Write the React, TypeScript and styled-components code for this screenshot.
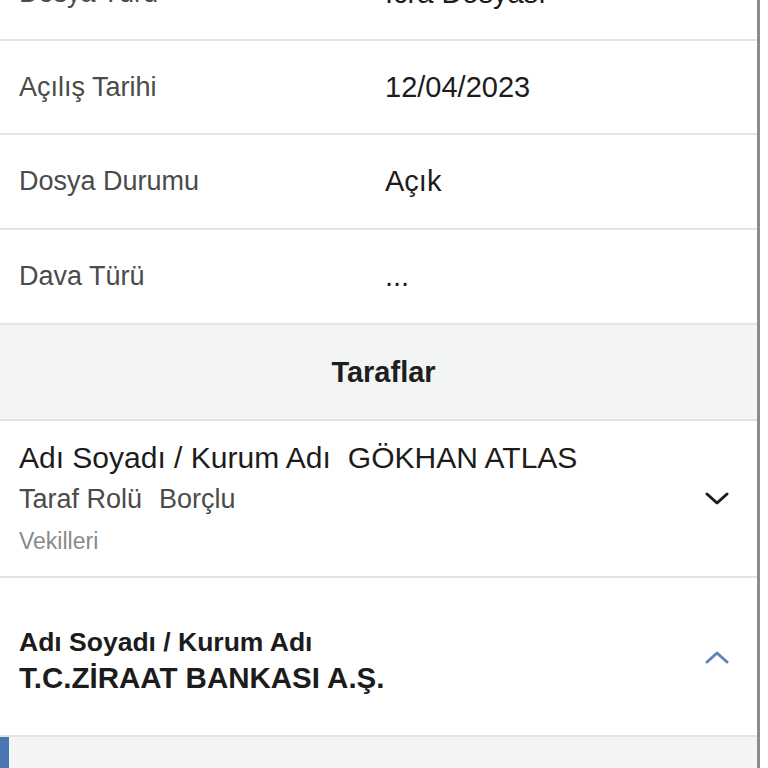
import React from 'react';
import styled, { createGlobalStyle } from 'styled-components';

const GlobalStyle = createGlobalStyle`
  html, body {
    margin: 0;
    padding: 0;
    background: #fff;
    font-family: "Liberation Sans", Arial, Helvetica, sans-serif;
    overflow: hidden;
  }
  * {
    box-sizing: border-box;
  }
`;

const Page = styled.div`
  display: flex;
  width: 768px;
  height: 768px;
  overflow: hidden;
  background: #fff;
`;

// the list is scrolled a little, so the first row is cut at the top
const Panel = styled.div`
  width: 760px;
  flex-shrink: 0;
  border-right: 3px solid #8c8c8c;
  margin-top: -53px;
  display: flex;
  flex-direction: column;
`;

const DetailRow = styled.div<{ $height: number }>`
  display: grid;
  grid-template-columns: 366px 1fr;
  align-items: center;
  height: ${(p) => p.$height}px;
  padding-left: 19px;
  border-bottom: 2px solid #e4e4e4;
`;

const Label = styled.span`
  font-size: 27px;
  color: #4b4b4b;
`;

const Value = styled.span`
  font-size: 29px;
  color: #1c1c1c;
`;

const SectionHeader = styled.div`
  display: flex;
  align-items: center;
  justify-content: center;
  height: 96px;
  padding-left: 10px;
  background: #f3f4f4;
  border-bottom: 2px solid #e2e2e2;
  font-size: 29px;
  font-weight: 700;
  color: #1e1e1e;
`;

const PartyItem = styled.div<{ $height: number }>`
  display: flex;
  align-items: center;
  justify-content: space-between;
  height: ${(p) => p.$height}px;
  padding: 0 28px 0 19px;
  border-bottom: 2px solid #e4e4e4;
  background: #fff;
`;

const PartyBody = styled.div<{ $offset?: number }>`
  display: flex;
  flex-direction: column;
  padding-top: ${(p) => p.$offset || 0}px;
`;

const Line = styled.div<{ $size: number; $height: number; $color: string; $bold?: boolean }>`
  font-size: ${(p) => p.$size}px;
  line-height: ${(p) => p.$height}px;
  color: ${(p) => p.$color};
  font-weight: ${(p) => (p.$bold ? 700 : 400)};
  white-space: pre;
`;

const Gap = styled.span<{ $w: number }>`
  display: inline-block;
  width: ${(p) => p.$w}px;
`;

const FooterBlock = styled.div`
  flex: 1;
  background: #f3f4f4;
  border-left: 9px solid #4a77b3;
`;

function Chevron({ up, color }: { up?: boolean; color: string }) {
  return (
    <svg width="24" height="14" viewBox="0 0 24 14">
      <polyline
        points={up ? '2,12 12,3 22,12' : '2,2 12,11 22,2'}
        fill="none"
        stroke={color}
        strokeWidth="3"
        strokeLinecap="round"
        strokeLinejoin="round"
      />
    </svg>
  );
}

const details = [
  { label: 'Dosya Türü', value: 'İcra Dosyası', height: 94 },
  { label: 'Açılış Tarihi', value: '12/04/2023', height: 94 },
  { label: 'Dosya Durumu', value: 'Açık', height: 95 },
  { label: 'Dava Türü', value: '...', height: 95 },
];

export default function App() {
  return (
    <Page>
      <GlobalStyle />
      <Panel>
        {details.map((d) => (
          <DetailRow key={d.label} $height={d.height}>
            <Label>{d.label}</Label>
            <Value>{d.value}</Value>
          </DetailRow>
        ))}
        <SectionHeader>Taraflar</SectionHeader>
        <PartyItem $height={157}>
          <PartyBody $offset={2}>
            <Line $size={30} $height={40} $color="#1c1c1c">
              Adı Soyadı / Kurum Adı<Gap $w={17} />GÖKHAN ATLAS
            </Line>
            <Line $size={27} $height={42} $color="#4b4b4b">
              Taraf Rolü<Gap $w={17} />Borçlu
            </Line>
            <Line $size={23} $height={42} $color="#8a8a8a">
              Vekilleri
            </Line>
          </PartyBody>
          <Chevron color="#1a1a1a" />
        </PartyItem>
        <PartyItem $height={159}>
          <PartyBody $offset={6}>
            <Line $size={26.5} $height={36} $color="#1c1c1c" $bold>
              Adı Soyadı / Kurum Adı
            </Line>
            <Line $size={29.5} $height={36} $color="#1c1c1c" $bold>
              T.C.ZİRAAT BANKASI A.Ş.
            </Line>
          </PartyBody>
          <Chevron up color="#5d87ba" />
        </PartyItem>
        <FooterBlock />
      </Panel>
    </Page>
  );
}
